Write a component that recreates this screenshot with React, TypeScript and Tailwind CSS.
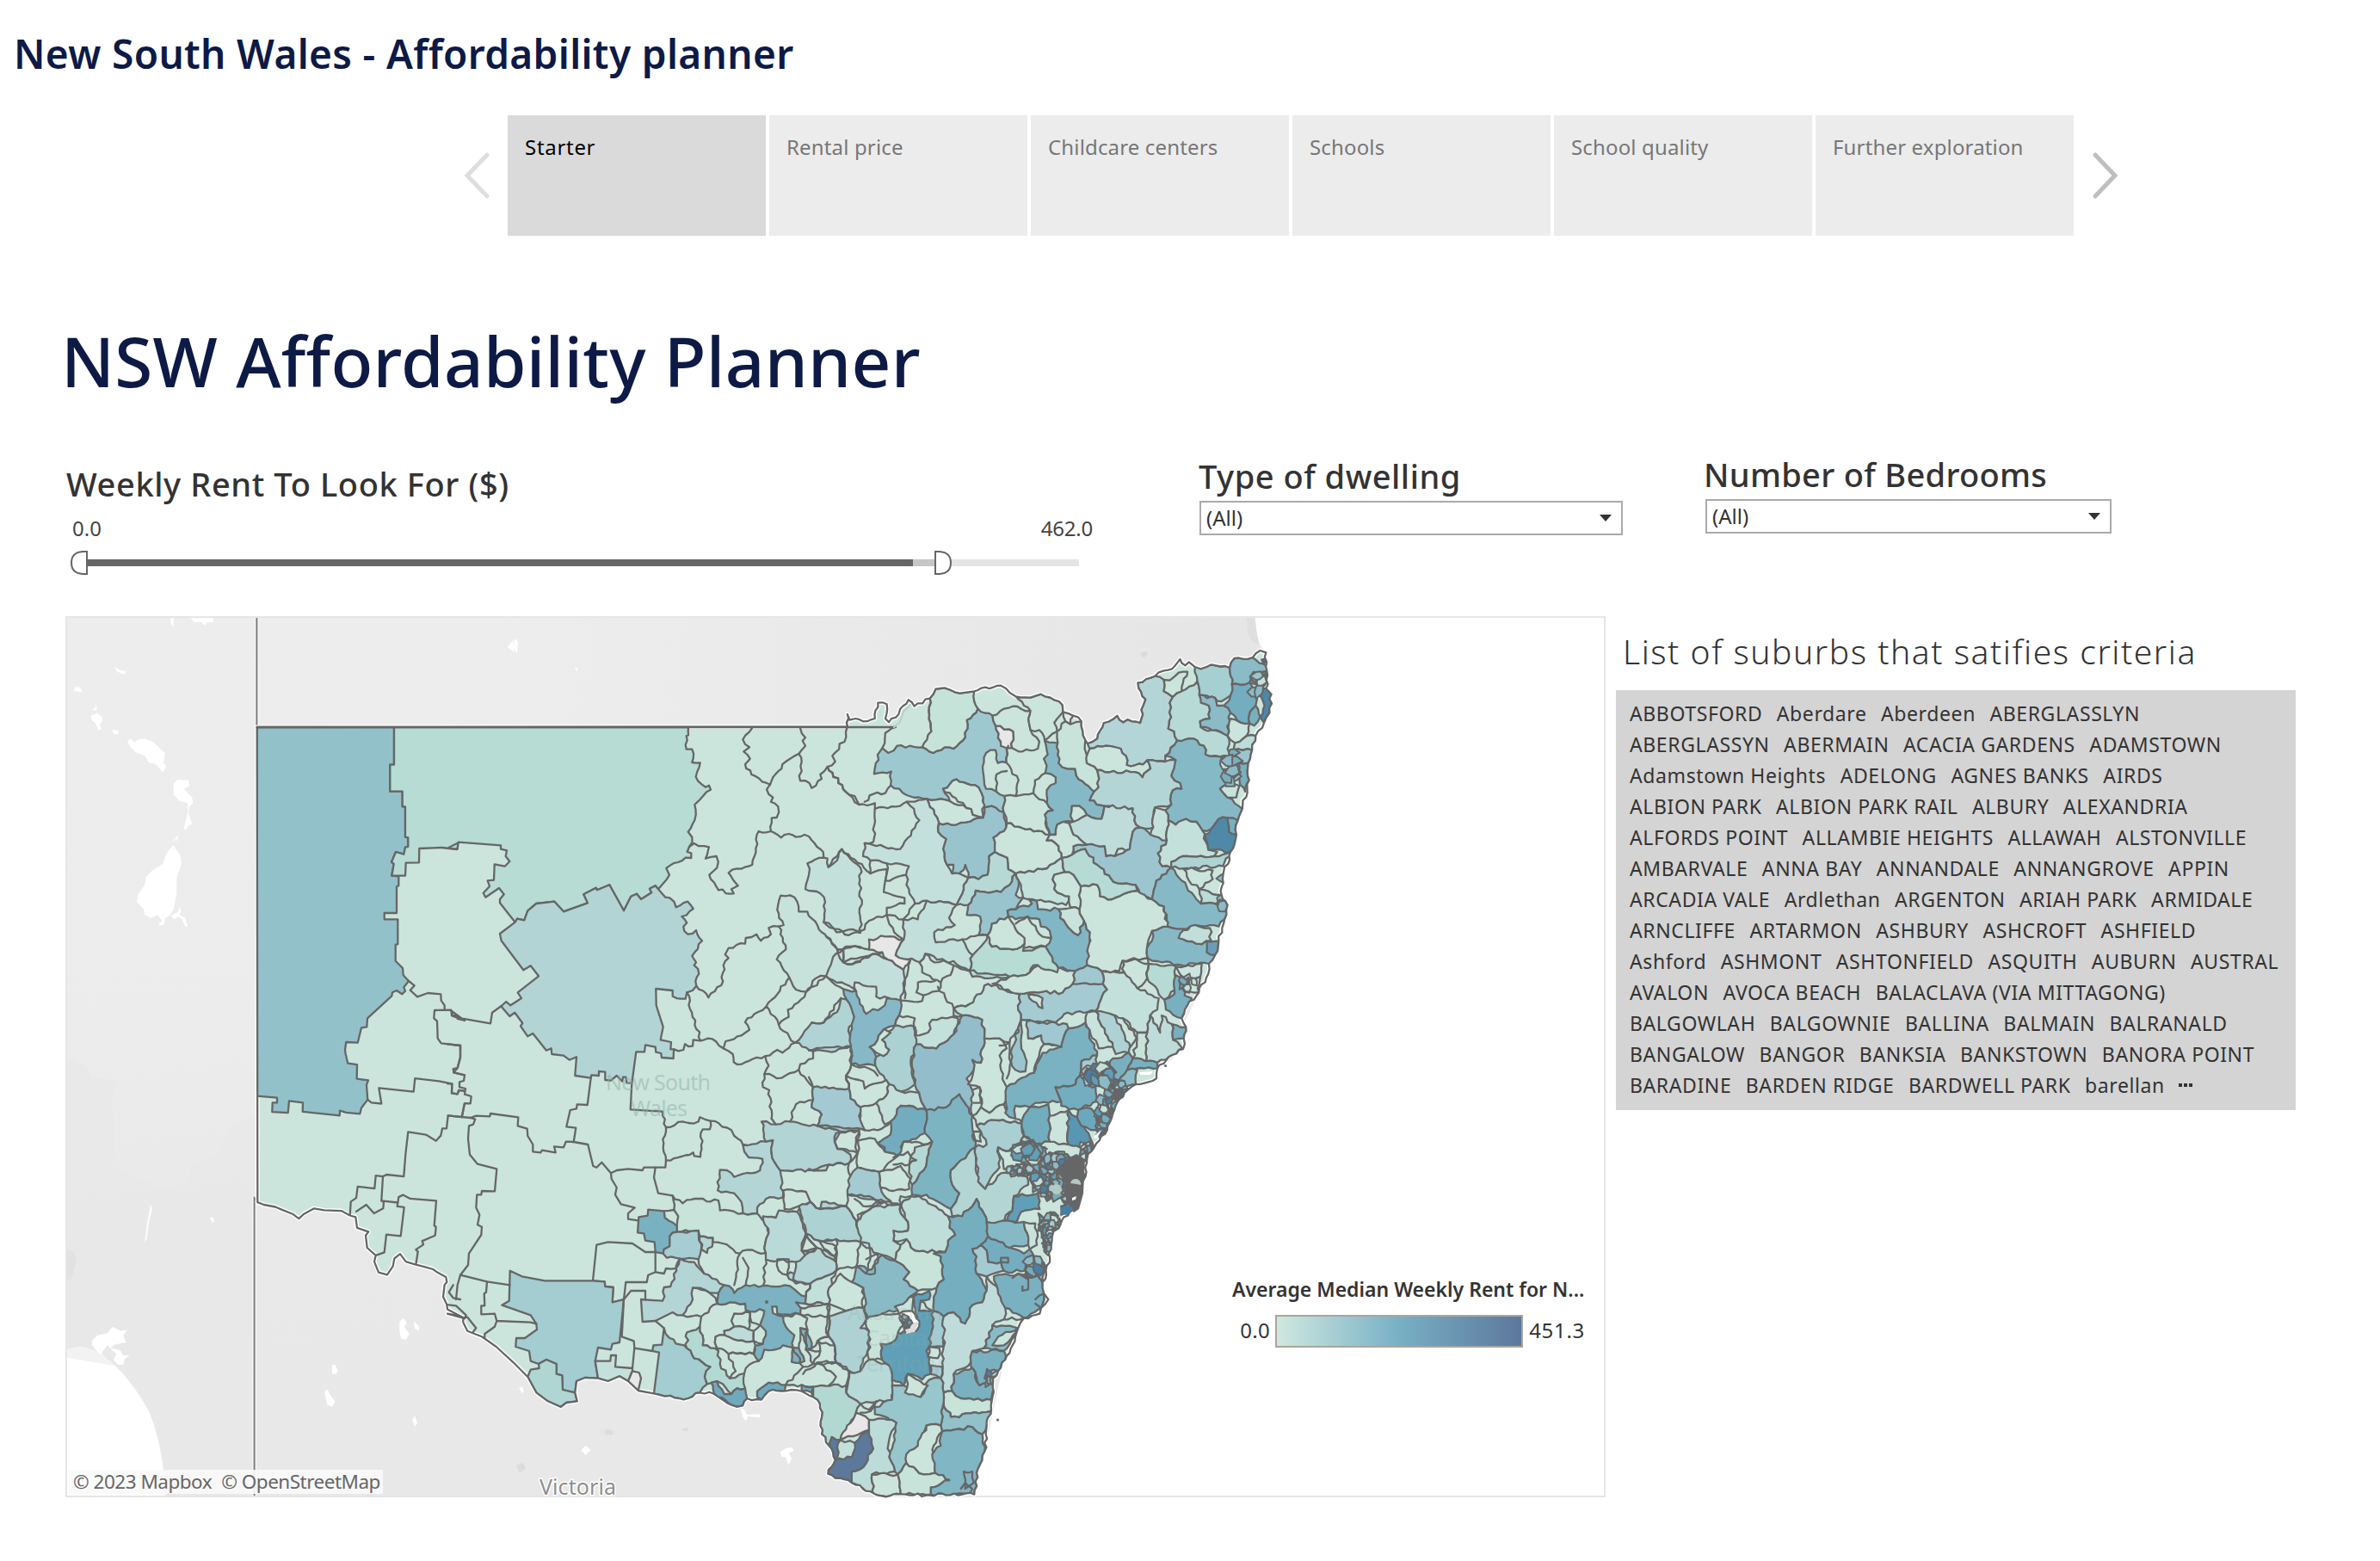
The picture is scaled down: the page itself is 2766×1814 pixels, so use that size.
import React from "react";

const FONT = "font-['Noto_Sans',sans-serif]";

/* ---------- map geometry ---------- */

// Survey sheets: origin on the page and drawing units per page pixel.
const SHEETS: Record<string, [number, number, number, number]> = {
  A: [60, 700, 3, 3],
  B: [60, 1200, 3, 2.8],
  C: [520, 820, 3, 3],
  D: [520, 1280, 3, 3],
  E: [960, 740, 2.904, 3],
  F: [940, 1100, 3, 3],
  G: [900, 1380, 3, 3],
};

type Pt = [number, number];

function parse(src: string): Pt[] {
  let s = SHEETS.A;
  const out: Pt[] = [];
  for (const tok of src.trim().split(/\s+/)) {
    if (SHEETS[tok]) {
      s = SHEETS[tok];
      continue;
    }
    const [x, y] = tok.split(",").map(Number);
    out.push([s[0] + x / s[2], s[1] + y / s[3]]);
  }
  return out;
}

function rnd(a: number, b: number, k = 0) {
  const v = Math.sin(a * 12.9898 + b * 78.233 + k * 37.719) * 43758.5453;
  return v - Math.floor(v);
}

const anchors: Pt[] = [];

function snap(pts: Pt[]): Pt[] {
  const n = anchors.length;
  const res: Pt[] = [];
  for (const p of pts) {
    let best: Pt | null = null;
    let bd = p[0] < 760 ? 2.5 : 5;
    for (let i = 0; i < n; i++) {
      const d = Math.hypot(anchors[i][0] - p[0], anchors[i][1] - p[1]);
      if (d < bd) {
        bd = d;
        best = anchors[i];
      }
    }
    const q = best ?? p;
    if (!best) anchors.push(p);
    const last = res[res.length - 1];
    if (!last || last !== q) res.push(q);
  }
  return res;
}

// Splits an edge into small deterministic wiggles; shared edges come out identical.
function rough(p: Pt, q: Pt): Pt[] {
  const flip = p[0] > q[0] || (p[0] === q[0] && p[1] > q[1]);
  const a = flip ? q : p;
  const b = flip ? p : q;
  const len = Math.hypot(b[0] - a[0], b[1] - a[1]);
  const amp = a[0] < 770 ? 0 : 1.9;
  const n = Math.floor(len / 4.5);
  if (n < 2 || amp === 0) return [q];
  const nx = -(b[1] - a[1]) / len;
  const ny = (b[0] - a[0]) / len;
  const mids: Pt[] = [];
  for (let i = 1; i < n; i++) {
    const o = (rnd(a[0] + i, b[1], i) - 0.5) * 2 * amp;
    mids.push([a[0] + ((b[0] - a[0]) * i) / n + nx * o, a[1] + ((b[1] - a[1]) * i) / n + ny * o]);
  }
  if (flip) mids.reverse();
  return [...mids, q];
}

function toPath(pts: Pt[], close: boolean) {
  if (!pts.length) return "";
  let d = `M${pts[0][0].toFixed(1)} ${pts[0][1].toFixed(1)}`;
  const seq = close ? [...pts, pts[0]] : pts;
  for (let i = 1; i < seq.length; i++)
    for (const r of rough(seq[i - 1], seq[i])) d += `L${r[0].toFixed(1)} ${r[1].toFixed(1)}`;
  return d + (close ? "Z" : "");
}

const OUTLINE = `A 716,435 E 72,313 72,270 80,290 100,285 125,295 165,285 175,230 205,235 200,285 212,298 245,270 250,252 278,220 298,242 350,215 370,182 400,178 435,193 500,190 590,170 620,195 640,208 690,212 725,200 770,220 798,238 800,262 835,275 862,295 868,345 882,372 915,355 937,300 983,275 1003,298 1018,288 1060,300 1070,240 1078,218 1055,180 1052,160 1110,137 1140,118 1168,112 1195,78 1212,100 1225,88 1245,105 1265,112 1300,97 1362,108 1378,75 1440,72 1465,48 1485,55 1488,120 1485,180 1503,200 1497,265 1478,300 1450,345 1438,395 1425,440 1428,500 1405,600 1390,640 1385,690 1365,750 1340,830 1335,900 1355,935 1345,985 1325,1060 1313,1110 1292,1140 F 1385,110 1360,160 1320,205 1300,250 1315,280 1307,320 1305,357 1255,385 1215,425 1212,460 1140,480 1100,510 1065,570 1040,640 995,700 970,740 965,800 950,850 945,890 910,925 858,990 G 975,140 965,200 960,260 935,330 940,370 955,390 930,420 925,440 870,455 850,490 830,550 805,600 780,640 762,680 755,760 740,830 733,920 710,980 697,1070 360,1073 270,1030 187,998 212,950 190,900 165,860 165,800 150,740 130,715 D 1275,1030 1235,1010 1200,1005 1175,1010 1120,1010 1095,1040 1045,1035 1030,1060 990,1058 960,1040 930,1020 880,1015 840,1035 760,1028 720,1018 665,1008 630,975 600,958 560,975 525,965 480,963 450,975 445,1015 452,1045 415,1050 395,1065 350,1045 310,1015 280,960 230,910 170,855 120,820 70,800 55,770 55,755 30,745 0,740 B 1440,930 1420,920 1380,900 1378,885 1365,860 1370,820 1378,812 1375,795 1345,780 1330,770 1300,762 1270,755 1235,745 1215,720 1195,735 1190,760 1170,788 1140,780 1125,745 1130,725 1100,700 1095,660 1105,648 1065,635 1060,600 1040,595 1010,580 950,578 915,572 880,590 862,605 840,590 800,575 780,567 740,560 718,552`;

const REGIONS: [string, string][] = [
  ["#92c1ca", `A 716,435 1194,435 1194,566 1180,566 1180,659 1223,659 1223,712 1233,712 1233,818 1243,820 1243,852 1233,854 1228,878 1200,870 1185,905 1193,912 1186,953 1210,955 1210,988 1203,990 1203,1083 1160,1083 1160,1105 1207,1105 1207,1192 1199,1193 1199,1250 1224,1275 1226,1300 1245,1320 1228,1342 1233,1355 1222,1366 1203,1353 1188,1360 1186,1372 1101,1450 1099,1480 1080,1483 1067,1535 1027,1533 1023,1560 B 1025,70 1033,100 1065,104 1064,150 1104,155 1098,170 1102,218 1080,245 1075,264 1027,260 1005,254 1004,270 875,257 876,228 828,222 824,261 769,258 770,228 786,228 786,212 716,206`],
  ["#b6dcd4", `A 1194,435 C 840,75 840,103 833,105 833,152 853,152 853,198 881,199 866,248 900,284 912,278 918,293 883,325 862,345 866,380 862,400 839,440 853,458 843,492 836,510 850,514 850,531 830,530 763,567 774,590 765,605 735,640 725,628 705,638 712,652 675,675 660,656 640,665 615,715 565,625 522,643 518,635 475,658 489,688 405,718 373,683 310,690 280,715 268,748 243,743 236,755 183,688 183,675 197,658 180,636 133,668 125,653 147,630 140,610 162,608 164,553 200,560 217,543 203,525 207,505 186,500 186,487 38,476 35,500 0,497 A 1418,838 1414,861 1360,855 1282,858 1281,907 1235,908 1233,953 1186,953 1193,912 1185,905 1200,870 1228,878 1233,854 1243,852 1243,820 1233,818 1233,712 1223,712 1223,659 1180,659 1180,566 1194,566`],
  ["#b2d4d5", `C 236,755 183,795 188,820 265,922 290,907 318,943 245,1000 258,1020 220,1045 205,1032 187,1048 217,1083 235,1070 262,1107 255,1117 280,1153 298,1143 345,1202 362,1195 364,1215 405,1220 425,1235 450,1225 445,1290 500,1298 502,1288 528,1290 528,1275 550,1277 550,1305 570,1307 590,1290 610,1310 612,1295 622,1295 625,1315 643,1317 658,1207 687,1207 690,1183 725,1190 727,1208 745,1212 747,1227 788,1230 790,1198 778,1198 780,1173 743,1165 752,1120 728,1045 727,987 785,993 785,1013 830,1022 835,1000 868,977 865,960 877,935 860,905 867,895 853,873 888,820 867,783 838,797 823,770 835,757 817,735 857,708 838,683 797,703 775,670 760,668 735,640 725,628 705,638 712,652 675,675 660,656 640,665 615,715 565,625 522,643 518,635 475,658 489,688 405,718 373,683 310,690 280,715 268,748 243,743`],
  // Riverina and the south west
  ["#b4d5d6", `D 1030,150 1110,140 1135,135 1130,180 1160,240 1170,330 1168,335 1110,340 1080,370 1080,390 1030,390 1025,350 1000,320 942,310 950,238 975,240 1000,263 1090,240 1098,200 1050,195 1035,175`],
  ["#c7e3da", `D 785,328 820,355 835,343 945,345 950,380 1020,395 1080,390 1120,430 1120,460 1108,495 1110,528 1030,520 1020,530 960,495 925,490 925,475 880,470 875,450 800,455 800,435 805,400 790,378`],
  ["#7ab1c1", `D 700,377 755,382 758,405 800,435 795,455 775,470 775,505 755,515 752,530 725,525 722,490 690,485 685,460 663,457 667,403 698,398`],
  ["#a6cdd2", `D 800,455 850,452 880,455 885,515 875,550 810,548 765,545 752,530 755,515 775,505 775,470`],
  ["#b4d5d6", `D 885,475 915,468 925,495 905,528 885,515`],
  ["#cbe5dc", `D 520,500 560,490 645,495 690,525 730,530 725,595 700,605 695,630 622,630 615,690 575,700 578,648 550,645 548,628 507,625`],
  ["#b4d5d6", `D 800,550 860,560 895,600 965,640 945,668 855,650 855,690 820,745 785,735 725,765 680,768 675,690 750,695 755,648 778,645`],
  ["#a3cdd0", `D 218,590 260,610 340,625 507,625 548,628 550,645 578,648 575,700 612,690 600,840 575,845 570,865 525,858 515,905 525,965 480,963 450,975 445,1015 402,1005 400,955 380,950 380,915 345,900 318,915 290,905 285,870 238,855 240,825 270,825 312,795 310,775 290,745 190,710 215,695`],
  ["#b0d6d4", `D 345,900 380,915 380,950 400,955 402,1005 445,1015 452,1045 415,1050 395,1065 350,1045 310,1015 280,960 290,935 320,930 318,915`],
  ["#a3cdd0", `D 755,790 775,825 835,860 860,895 917,925 897,960 905,985 880,1015 840,1035 760,1028 720,1018 738,875 715,870 718,850 748,848`],
  ["#c4e0db", `D 585,925 645,930 645,940 630,975 600,958 560,975 525,965 515,905 568,905 570,885 588,885`],
  ["#e7e7e7", `D 645,940 668,945 675,965 665,1008 630,975`],
  ["#cbe5dc", `D 885,750 940,705 985,700 1038,705 1055,735 1000,740 990,765 1000,785 965,800 967,815 935,820 940,860 945,870 890,850 880,785`],
  ["#7cb2c1", `D 945,668 965,650 995,655 1000,668 1040,640 1100,642 1175,640 1210,655 1250,680 1248,705 1215,700 1232,720 1230,742 1180,742 1150,740 1148,715 1132,715 1135,738 1150,745 1170,750 1180,785 1210,815 1205,858 1170,850 1160,860 1105,865 1085,905 1068,880 1068,850 1100,845 1110,800 1090,780 1105,730 1040,728 1038,705 985,700 945,700`],
  ["#bddcd9", `D 965,800 1000,785 1050,795 1068,800 1068,835 1000,830 967,815`],
  ["#cbe5dc", `D 935,820 967,815 1000,830 1068,835 1068,880 980,880 940,860`],
  ["#b3d9d3", `D 840,862 835,805 880,785 890,850 945,870 950,915 985,965 1035,948 1038,1000 1010,1000 990,1020 960,985 940,975 900,985 897,960 917,925 860,895`],
  ["#6fa9be", `D 920,980 945,978 965,1020 1000,1030 1003,1005 1035,1000 1040,1045 1025,1060 990,1058 930,1020`],
  ["#6fa9be", `D 1080,1010 1120,980 1180,988 1185,1005 1125,1010 1105,1040 1080,1030`],
  ["#6fa9be", `D 1235,988 1275,995 1272,1020 1235,1010`],
  ["#7cb2c1", `D 1200,865 1225,860 1245,905 1200,908`],
  ["#7cb2c1", `D 1230,790 1255,795 1270,860 1250,865`],
  ["#aed3d4", `D 1220,385 1265,350 1300,375 1305,350 1390,365 1410,420 1428,440 1425,465 1380,470 1340,485 1295,485 1250,460 1235,425`],
  ["#badad9", `D 1100,400 1145,405 1155,380 1220,385 1240,440 1250,460 1235,520 1250,540 1255,555 1215,560 1110,550 1110,528 1108,495 1120,460`],
  ["#cbe5dc", `D 1250,460 1288,510 1270,525 1235,520`],
  ["#b4d5d6", `D 1288,510 1350,540 1355,590 1310,620 1265,635 1215,635 1185,605 1195,595 1220,605 1230,585 1215,560 1255,555 1250,540`],
  ["#b2d4d5", `D 1095,70 1145,80 1195,70 1290,85 1370,105 1350,140 1360,165 1405,185 1400,215 1330,220 1320,240 1160,240 1130,180 1135,135 1110,130`],
  ["#a5cbd2", `C 1275,1330 1325,1340 1400,1335 1405,1370 1440,1400 D 1435,100 1370,105 1290,85 1305,45 1270,20`],
  // Central west
  ["#c6e2da", `C 1162,662 1210,668 1225,718 1255,718 1295,780 1360,850 1345,915 1320,943 1285,950 1250,998 1215,990 1192,948 1148,885 1180,850 1155,770 1172,765 1150,712`],
  ["#c4e0db", `C 1255,550 1312,530 1325,533 1328,563 1358,540 1375,500 1440,565 1440,792 1385,798 1330,758 1312,755 1317,685 1300,655 1248,640 1260,590`],
  ["#b0d4d5", `C 1212,1175 1245,1135 1270,1105 1312,1105 1365,1055 1372,1020 1392,1025 1415,1060 1420,1105 1400,1120 1407,1188 1340,1208 1275,1205`],
  ["#c3dfdb", `F 85,35 120,10 120,55 150,62 235,25 275,45 330,80 335,115 320,188 235,175 235,140 160,125 165,155 60,105`],
  ["#86b8c7", `F 120,148 172,155 178,200 200,235 265,205 272,180 320,188 315,240 300,275 262,288 240,325 212,350 235,385 232,415 148,410 145,300 158,245 130,185`],
  ["#acd1d3", `F 300,275 370,280 375,340 355,400 370,480 320,505 280,480 260,450 232,415 235,385 280,360 255,325`],
  ["#cbe5dc", `F 262,288 285,300 255,325 280,360 260,382 235,370 212,350 240,325`],
  ["#cbe5dc", `F 130,450 190,470 195,495 270,465 280,480 270,520 235,545 185,555 150,535 140,495`],
  ["#a3cad2", `F 25,490 140,495 150,535 185,555 175,590 195,640 110,630 40,625 45,580 10,550`],
  ["#c2dfda", `F 280,480 320,505 385,510 410,570 320,555 300,600 265,620 240,550 270,520`],
  ["#74acbf", `F 320,555 405,560 405,650 375,670 330,680 310,730 265,715 265,700 240,685 285,655 285,610`],
  ["#93bdcb", `F 535,240 605,255 612,320 600,405 570,395 575,430 550,460 570,500 570,590 510,550 525,515 480,560 410,570 385,510 370,480 360,420 375,345 445,355 505,305`],
  ["#c3e0da", `F 370,310 415,300 430,255 480,250 520,250 505,305 445,355 375,345`],
  ["#cbe5dc", `F 612,320 665,320 690,355 665,380 670,430 690,490 680,550 630,580 600,560 595,490 555,480 575,430 570,395 600,405`],
  ["#7db4c2", `F 410,570 480,560 525,515 570,590 580,700 530,745 495,780 500,830 525,860 495,915 410,865 360,865 360,830 400,780 430,680 405,650`],
  ["#a9cfd3", `F 585,625 650,605 745,615 750,660 720,720 660,700 665,770 615,845 590,820 585,740 580,700 620,690 600,645`],
  ["#b3d6d5", `F 580,700 590,820 615,845 670,790 760,800 765,830 715,870 710,920 670,960 655,980 620,960 585,880 535,940 500,940 495,915 525,860 500,830 495,780 530,745`],
  ["#cbe5dc", `F 660,700 720,720 770,760 740,780 680,775`],
  ["#b0d6d5", `F 720,720 760,665 830,705 790,730`],
  ["#c8e4da", `F 575,590 605,550 640,580 680,560 720,600 745,615 650,605 585,625`],
  ["#7ab2c2", `F 965,265 1005,380 950,400 945,450 930,480 860,490 880,540 790,545 770,560 720,555 715,590 685,580 690,490 785,440 815,370 880,350 905,285`],
  ["#74adbf", `F 860,490 930,480 945,450 1000,490 1005,540 940,570 880,555 880,540`],
  ["#72acbf", `F 745,600 770,560 835,550 840,590 840,680 790,690 750,660`],
  ["#cbe5dc", `F 840,590 905,570 905,690 840,680`],
  ["#5896b3", `F 905,580 935,595 975,650 985,690 920,695 905,690`],
  ["#6ca8bd", `F 940,575 985,565 1010,620 1000,640 950,625 935,595`],
  ["#c1dfda", `F 505,215 560,200 625,130 735,165 730,220 740,255 700,335 665,320 612,320 605,255 535,240 505,240`],
  ["#b5dcd4", `F 600,0 825,0 870,75 800,65 770,90 700,105 570,105 560,85`],
  ["#a5cbd2", `F 735,165 800,160 885,160 920,130 930,85 970,65 1020,85 1025,130 1040,150 1000,225 890,235 860,265 740,255 730,220`],
  ["#cbe5dc", `F 765,165 815,180 815,215 780,190`],
  ["#cbe5dc", `F 640,130 700,105 770,90 800,65 920,90 920,130 885,160 800,160 735,165`],
  ["#c4e0da", `F 1020,85 1100,90 1145,145 1220,180 1215,220 1190,240 1180,300 1145,300 1095,250 1000,225 1040,150 1025,130`],
  ["#b5dbd4", `F 1185,60 1280,70 1280,150 1240,185 1180,110`],
  ["#78b0c0", `F 1280,100 1310,110 1310,170 1335,180 1300,250 1245,220 1245,190 1275,165`],
  ["#bfdcda", `F 1180,300 1190,240 1225,300 1230,240 1265,270 1270,325 1305,357 1255,385 1215,405 1175,400`],
  ["#78b0c0", `F 1265,270 1315,280 1300,330 1270,325`],
  ["#a0c8d0", `F 760,260 900,270 905,285 880,350 820,340 810,310 765,320`],
  ["#9bc5ce", `F 710,350 740,255 740,340 760,400 755,435 720,430 705,400`],
  ["#c9e3dc", `F 970,230 1005,235 1060,350 1010,355 965,265`],
  ["#aed1d4", `F 1005,235 1065,240 1120,350 1115,370 1070,375 1060,350`],
  ["#c8e3db", `F 1145,300 1180,300 1175,400 1130,390 1115,370`],
  ["#78b0c0", `F 1050,400 1115,370 1125,400 1110,430 1080,470 1050,450`],
  ["#78b0c0", `F 1125,400 1215,405 1210,430 1120,430`],
  ["#8abbc7", `F 1110,430 1145,430 1150,470 1100,490 1080,470`],
  ["#a5cbd2", `F 950,400 1005,380 1000,425 950,445`],
  ["#5f9fb8", `F 715,870 800,860 805,915 740,925 725,960 690,955 710,920`],
  ["#4a7fa3", `F 880,905 905,900 925,915 880,935`],
  ["#a5cbd2", `F 145,800 170,770 245,785 250,840 290,900 285,920 265,890 135,865`],
  ["#cbe5dc", `F 245,785 320,765 355,810 350,845 280,850 250,840`],
  ["#cbe5dc", `F 165,680 230,670 265,715 310,730 245,785 170,770 170,720`],
  ["#b5d8d6", `F 370,700 430,680 400,780 360,830 350,760`],
  // North west
  ["#9ec8d0", `E 512,250 562,275 572,310 590,380 615,380 608,438 580,440 572,395 540,405 530,470 540,530 575,540 602,555 600,612 560,590 535,595 530,560 515,525 440,497 395,530 418,573 340,565 272,552 218,518 220,470 162,478 168,440 190,388 210,405 240,380 325,385 362,405 400,385 430,390 470,350 475,290`],
  ["#e7e7e7", `E 572,310 632,330 628,388 590,380`],
  ["#cbe5dc", `E 562,275 630,242 690,258 685,300 690,325 720,365 715,390 650,400 628,388 632,330 572,310`],
  ["#cbe5dc", `E 690,258 640,208 690,212 725,200 770,220 798,238 800,262 770,300 780,330 738,362 720,325 690,325 685,300`],
  ["#c6e3d9", `E 350,215 370,182 400,178 435,193 500,190 500,225 512,250 475,290 470,350 430,390 400,385 362,405 325,385 355,330`],
  ["#e7e7e7", `E 800,262 835,275 825,305 808,295`],
  ["#86b9c6", `E 738,362 782,370 785,440 815,460 840,460 845,485 905,540 890,570 940,590 930,635 880,620 855,590 830,590 825,625 835,645 800,645 780,655 775,690 755,690 745,660 738,620 765,605 745,580 745,535 775,510 775,490 740,475 745,450 735,425 748,410`],
  ["#c8e4da", `E 782,370 780,330 808,295 825,305 862,295 868,345 882,420 880,440 915,465 920,525 905,540 845,485 840,460 815,460 785,440`],
  ["#b3d5d7", `E 882,372 915,355 937,300 983,275 1003,298 1018,288 1060,300 1070,240 1078,218 1055,180 1052,160 1110,137 1140,150 1140,190 1170,210 1160,230 1165,280 1155,320 1175,330 1185,362 1145,415 1145,435 1085,430 1070,445 1015,447 1012,415 995,390 945,380 890,390`],
  ["#cbe5dc", `E 890,390 945,380 995,390 1012,415 1015,447 1070,445 1085,430 1095,460 1068,490 1055,475 920,475 880,440`],
  ["#b7dad6", `E 1253,155 1260,203 1292,240 1295,285 1262,295 1265,315 1355,345 1360,420 1330,418 1280,410 1275,380 1240,355 1185,362 1175,330 1155,320 1165,280 1160,230 1170,210 1200,190`],
  ["#cbe5dc", `E 1140,150 1160,152 1190,125 1220,122 1205,160 1190,195 1170,210 1140,190`],
  ["#a6cfd1", `E 1245,105 1300,97 1362,108 1370,165 1365,205 1335,225 1285,205 1260,203 1253,155`],
  ["#8abbc7", `E 1362,108 1378,75 1440,72 1478,95 1478,130 1445,135 1430,160 1370,165`],
  ["#73adbf", `E 1370,165 1430,160 1455,215 1450,240 1432,260 1430,302 1400,300 1365,265 1342,240 1365,205`],
  ["#8abbc7", `E 1260,203 1315,215 1320,240 1342,240 1365,265 1355,345 1330,330 1265,315 1262,295 1295,285 1292,240 1265,230`],
  ["#5f9fb8", `E 1445,135 1482,125 1482,162 1440,150`],
  ["#4d87a8", `E 1462,180 1485,180 1503,200 1497,265 1480,290 1465,280 1480,240 1460,200`],
  ["#78b0c0", `E 1432,260 1450,240 1465,280 1445,310 1430,302`],
  ["#46709c", `E 1470,80 1487,75 1488,100`],
  ["#cbe5dc", `E 1365,285 1400,300 1430,302 1420,345 1380,370 1355,345`],
  ["#bddcd9", `E 1380,370 1420,345 1450,345 1438,395 1375,395`],
  ["#86b9c6", `E 1185,362 1240,355 1275,380 1280,410 1330,418 1360,420 1345,450 1370,480 1365,510 1330,530 1355,560 1405,600 1390,640 1325,635 1300,670 1270,675 1250,645 1215,635 1180,655 1155,640 1145,605 1165,585 1170,535 1200,530 1195,510 1165,485 1165,435 1180,430 1145,415`],
  ["#9bc5ce", `E 1375,395 1425,395 1425,440 1390,440 1360,420`],
  ["#78b0c0", `E 1390,450 1425,440 1428,500 1415,540 1395,500`],
  ["#c8e3db", `E 1330,530 1365,510 1395,520 1385,560 1355,560`],
  ["#b4d5d6", `E 920,475 1055,475 1068,490 1095,460 1085,430 1145,435 1180,430 1165,485 1195,510 1200,530 1170,535 1165,585 1110,595 1105,665 1060,665 1040,640 1035,598 970,595 940,590 890,570 905,540 920,525`],
  ["#bfdcdb", `E 880,620 930,635 940,590 1035,598 1040,640 1060,665 1035,680 1028,715 1025,740 985,740 975,765 945,765 940,730 880,725 835,690 820,650`],
  ["#cbe5dc", `E 830,590 855,590 880,620 835,645 825,625`],
  ["#9cc5cf", `E 1060,665 1095,690 1130,690 1150,710 1120,755 1135,800 1165,805 1115,850 1100,915 1060,900 1045,865 970,855 915,795 875,740 830,760 835,730 880,725 940,730 945,765 975,765 1025,740 1028,715 1035,680`],
  ["#c4e0da", `E 1110,595 1145,605 1155,640 1150,710 1105,690`],
  ["#c4e0da", `E 1155,640 1180,655 1215,635 1250,645 1270,675 1290,742 1320,750 1310,765 1220,765 1165,785 1165,805 1135,800 1120,755 1150,710`],
  ["#4f89a8", `E 1325,635 1355,632 1360,680 1385,690 1365,750 1290,742 1278,690 1305,675`],
  ["#78b0c0", `E 1355,632 1390,640 1385,690 1360,680`],
  ["#add3d3", `E 1165,785 1220,765 1310,765 1365,750 1340,800 1205,808 1165,805`],
  ["#cbe5dc", `E 1205,808 1305,815 1305,845 1260,880 1225,850`],
  ["#86b9c6", `E 1165,805 1200,850 1250,915 1265,930 1330,925 1355,935 1345,985 1325,1010 1280,1010 1245,1005 1215,1020 1152,1010 1150,970 1140,940 1100,915 1115,850`],
  ["#b9dcd6", `E 1262,880 1320,900 1335,900 1330,925 1265,930`],
  ["#86b9c6", `E 1100,1025 1152,1010 1205,1015 1190,1050 1250,1070 1300,1060 1313,1110 1292,1140 1200,1145 1135,1135 1085,1120 1083,1085 1100,1060`],
  ["#c1dfda", `E 1195,1035 1240,1015 1295,1015 1300,1060 1250,1070 1190,1050`],
  ["#6b9dba", `E 1285,1062 1325,1060 1313,1110 1285,1100`],
  ["#cbe5dc", `E 860,870 915,865 925,905 965,915 1050,885 1100,915 1140,940 1152,1010 1100,1025 1083,1085 1085,1120 1000,1130 990,1165 930,1160 885,1145 890,1030 870,990 855,950`],
  ["#b5dbd4", `E 795,770 830,760 875,740 915,795 970,855 1045,865 1050,885 965,915 925,905 915,865 860,870 835,830 805,820`],
  ["#c4e0da", `E 640,825 730,810 795,770 805,820 770,830 770,880 820,905 810,935 710,920 665,910 650,850`],
  ["#cbe5dc", `E 770,830 805,820 835,830 860,870 855,950 825,945 820,905 770,880`],
  ["#81b6c4", `E 612,955 640,950 695,930 685,915 710,920 715,950 785,950 790,980 850,1040 870,990 890,1030 885,1080 885,1145 850,1170 790,1155 735,1080 760,1050 755,1025 725,1010 720,985 680,975 640,985 615,975`],
  ["#c9e3dc", `E 825,945 855,950 870,990 850,1040 790,980 785,950`],
  ["#9ac4cd", `E 560,590 600,612 608,665 565,700 570,750 550,765 545,830 515,845 480,840 470,795 445,840 425,825 430,795 408,795 395,740 405,705 378,680 380,650 440,655 500,635 530,630 535,595`],
  ["#cbe5dc", `E 340,565 418,573 490,600 495,620 530,630 500,635 440,655 380,650 375,630`],
  ["#cbe5dc", `E 440,497 515,525 530,560 530,630 495,620 490,600 445,575 395,530`],
  ["#c4e0dc", `E 272,575 340,565 375,630 378,680 405,705 395,740 408,795 425,825 475,840 440,935 340,920 300,930 280,880 270,830 280,800 205,790 150,780 125,765 130,720 250,740 315,640 285,590`],
  ["#b7d9d6", `E 550,765 570,750 612,770 615,810 630,830 620,865 590,890 505,885 480,935 440,935 475,840 515,845 545,830`],
  ["#9ac4cd", `E 505,885 590,890 620,865 630,830 650,850 640,900 665,910 650,930 640,950 612,955 615,975 560,1000 545,1040 515,1040 520,975 475,970 480,935`],
  ["#cbe5dc", `E 565,700 608,665 610,650 745,680 745,710 775,720 795,770 730,810 640,825 615,810 612,770 570,750`],
  ["#cbe5dc", `E 602,555 640,555 700,545 745,580 765,605 738,620 745,680 610,650 600,612`],
  ["#cbe5dc", `E 780,655 800,645 820,650 835,690 880,725 835,730 830,760 795,770 775,720 745,710 755,690 775,690`],
  ["#e7e7e7", `E 145,1055 200,1045 262,1055 235,1110 285,1125 270,1165 215,1130 190,1100 145,1090`],
  ["#c2dfdb", `E 340,920 440,935 415,980 435,1005 365,1030 370,1065 460,1055 495,1110 485,1160 430,1130 365,1135 335,1105 315,1135 235,1110 262,1055 260,985 310,985`],
  ["#b7dcd4", `E 520,1070 545,1040 560,1080 630,1090 670,1070 665,1095 735,1080 790,1155 780,1170 700,1145 680,1180 620,1185 485,1170 500,1120`],
  ["#cbe5dc", `E 560,1000 615,985 640,1020 670,1050 670,1070 630,1090 560,1080 545,1040`],
  ["#a0c8d0", `E 835,1172 885,1145 930,1160 930,1200 835,1200`],
  // South east
  ["#74aebf", `G 605,100 660,95 700,40 740,130 745,170 720,200 690,215 705,240 705,300 740,360 725,400 690,410 665,475 625,435 590,450 555,430 565,350 590,320 580,240 555,230 595,225 605,185 630,165 610,140`],
  ["#bfded9", `G 440,30 505,30 605,100 610,140 630,165 605,185 595,225 490,220 460,180 415,185 415,150 465,150 465,120 440,90`],
  ["#b8dcd8", `G 290,95 340,70 440,60 440,90 465,120 465,150 415,150 415,185 440,200 420,255 360,230 300,190 285,150`],
  ["#add2d3", `G 85,65 130,50 160,75 250,65 285,115 290,180 215,180 145,185 100,165`],
  ["#c7e3da", `G 440,200 460,180 490,220 595,225 555,230 580,240 590,320 565,350 500,360 450,320 470,295 420,255`],
  ["#89bbc7", `G 270,330 285,275 340,285 375,235 420,255 470,295 450,320 500,360 440,420 375,440 360,460 320,460 310,350`],
  ["#cbe5dc", `G 215,180 290,180 300,190 290,270 215,290 215,260`],
  ["#b4d5d6", `G 75,260 150,220 215,260 215,290 115,330 65,320`],
  ["#cbe5dc", `G 190,350 230,300 270,330 310,350 310,420 250,430 190,405`],
  ["#c2dfda", `G 115,330 210,300 190,350 190,405 120,405 110,370`],
  ["#aed2d3", `G 190,450 250,430 310,420 320,460 300,490 330,500 325,570 300,640 280,655 215,610 210,550 190,520`],
  ["#5f9fb8", `G 485,380 540,360 540,390 510,395 505,430 545,440 540,555 530,570 545,650 515,670 465,650 450,690 410,670 400,620 375,600 370,545 410,540 415,500 440,510 500,480`],
  ["#c8e4da", `G 320,460 375,440 435,440 450,480 410,540 370,545 375,600 330,600 325,490`],
  ["#ffffff", `G 435,440 480,430 505,465 495,500 455,505 440,480`],
  ["#cbe5dc", `G 420,415 475,370 485,380 480,430 435,440`],
  ["#a5cbd2", `G 545,440 590,450 595,480 590,555 540,555`],
  ["#cbe5dc", `G 540,555 575,560 570,595 535,590`],
  ["#a5cbd2", `G 545,620 585,625 580,665 545,650`],
  ["#bfdcda", `G 590,450 625,435 665,475 690,410 725,400 740,360 740,310 775,345 805,420 800,460 760,480 730,560 690,570 685,610 625,650 620,710 590,715 580,665 590,555`],
  ["#79b1c1", `G 765,310 850,300 920,310 935,330 940,370 930,420 870,455 805,420 780,370`],
  ["#74adbf", `G 720,200 745,170 820,210 870,230 890,215 905,240 890,295 800,290 790,260 745,260 740,220`],
  ["#a5cbd2", `G 690,215 720,200 740,220 745,260 790,260 800,290 740,310 705,300 705,240`],
  ["#86b9c6", `G 740,130 800,115 870,120 885,200 820,210 745,170`],
  ["#c8e3db", `G 870,120 910,125 915,200 890,215 885,200`],
  ["#6ca8bd", `G 920,90 970,130 960,160 920,150`],
  ["#a5cbd2", `G 890,295 905,240 950,280 935,330 920,310`],
  ["#89bbc7", `G 760,480 850,490 800,570 725,550`],
  ["#cbe5dc", `G 760,550 780,520 845,490 800,550`],
  ["#79b1c1", `G 700,570 805,575 805,600 780,640 750,640 755,670 715,690 690,620`],
  ["#79b1c1", `G 625,650 690,630 715,690 762,680 755,740 650,735 620,710`],
  ["#c7e3da", `G 590,750 590,715 620,710 650,735 755,740 755,780 615,800`],
  ["#92c1ca", `G 590,750 615,800 755,780 740,830 725,860 690,835 585,850 580,830`],
  ["#b7d9d8", `G 260,645 300,640 325,590 400,620 410,670 410,740 340,750 300,755 250,715`],
  ["#97c6cd", `G 410,690 450,690 510,730 540,670 580,665 590,715 590,750 580,830 530,830 525,870 490,930 460,960 430,1000 420,990 400,940 420,880 425,820 350,790 350,765 410,740`],
  ["#cbe5dc", `G 460,655 535,690 520,735 455,715`],
  ["#cbe5dc", `G 530,830 580,830 585,850 555,900 560,995 520,1000 470,960 460,930 500,900`],
  ["#81b6c4", `G 585,850 690,835 725,860 733,920 710,980 697,1070 545,1070 545,1045 610,1020 560,995 550,930 580,900`],
  ["#b2d8d2", `G 130,685 250,690 250,715 300,755 280,800 230,880 200,870 190,900 165,860 165,800 150,740 130,715`],
  ["#e7e7e7", `G 285,785 330,810 330,845 235,880`],
  ["#5c799b", `G 190,900 205,870 235,880 240,940 280,890 330,845 350,870 345,910 310,975 270,1030 187,998 212,950`],
  ["#c4e0da", `G 235,885 280,880 270,940 225,945`],
  ["#bcdcd9", `G 335,840 330,800 410,810 425,830 400,880 405,940 420,990 340,1000 345,1070 270,1030 270,990 310,975 345,910`],
  ["#cbe5dc", `G 340,1000 430,1010 440,1070 360,1073 345,1070`],
  ["#c8e4da", `G 435,1010 470,960 520,1000 560,995 610,1020 545,1045 545,1070 440,1070`],
];

const LINES: string[] = [
  `C 845,998 882,1168 857,1165 855,1187 828,1180 823,1200 790,1198`,
  `C 882,1168 923,1162 962,1195`,
  `A 1245,1320 1265,1336 1250,1352 1275,1375 1312,1362 1357,1366 1358,1388 1370,1405 1370,1421`,
  `A 1425,1560 1425,1545 1358,1537 1346,1520 1344,1460 1333,1450 1335,1422 1393,1421 1395,1440 1413,1442 1415,1452 1440,1458 C 15,1065 17,1082 35,1088 150,1108 156,1070 187,1048`,
  `B 1425,45 1425,80 1415,115 1400,118 1402,130 1440,138`,
  `B 1102,218 1115,228 1150,231 1141,180 1262,192 1267,149 1350,158 1396,166 1395,197 1415,200 1420,187 1440,190`,
  `B 1440,230 1430,275 1382,270 1377,312 1362,312 1357,335 1340,352 1305,332 1243,323 1234,395 1228,468 1168,462 1155,468 1130,465 1126,507 1067,501 1062,538 1043,550 1042,590`,
  `B 1155,468 1150,547 1207,553 1205,565 1229,568 1217,662 1167,657 1160,715 1130,725`,
  `B 1150,547 1158,552 1156,572 1124,588 1097,560 1062,582`,
  `B 1207,553 1210,535 1225,528 1250,540 1341,547 1334,628 1340,632 1337,660 1292,678 1296,690 1270,706 1277,712 1272,752`,
  `C 0,1180 45,1186 45,1225 35,1262 20,1278 60,1288 57,1308 42,1312 42,1330 63,1335 60,1355 83,1362 80,1387 57,1387 50,1432`,
  `C 0,1318 15,1320 15,1350 35,1354 37,1342 60,1345`,
  `C 0,1432 80,1437 100,1430 148,1432 150,1422 247,1435 D 245,85 278,95 280,120 298,150 298,175 325,178 330,170 377,178 372,157 405,160 413,140 440,141 448,92 415,88 428,30 450,25 452,10 488,12 C 500,1298`,
  `D 80,57 97,62 90,80 75,85 72,130 78,185 105,218 172,235 165,313 120,312 118,325 103,325 100,370 112,395 105,430 120,437 118,465 75,530 72,570 45,605 35,640 30,690`,
  `D 440,141 490,150 508,225 520,230 538,212 570,250 590,240 630,235 680,240 685,230 760,230 762,205 752,160 762,90 750,35 638,28 C 643,1317`,
  `D 762,205 857,178 860,190 882,193 890,97 915,97 917,68 880,55 875,70 840,75 820,70 765,90`,
  `D 917,68 945,75 990,100 1000,120 1030,150`,
  `D 725,230 720,265 735,320 785,328`,
  `D 570,250 572,270 590,300 585,325 605,358 653,370 630,390 630,410 665,415`,
  `D 755,382 790,378`,
  `D 725,595 755,600 762,582 797,582 800,550`,
  `D 45,605 138,628 218,640`,
  `D 138,630 135,665 128,670 130,712 118,712 118,742 165,740 172,765 290,770 310,775`,
  `D 172,765 165,785 130,810 130,825`,
  `D 55,755 70,752 100,790 85,810`,
  `D 0,708 30,712 65,745 60,755`,
  `D 20,640 5,665 20,685 45,690`,
  `D 612,690 608,820 650,835 652,860 715,870`,
  `D 655,860 645,930`,
  `D 615,690 640,660 690,660 690,692`,
  `D 725,765 745,780 755,790`,
  `D 820,745 885,750`,
  `D 855,650 880,650 935,685 940,705`,
  `D 1000,740 1050,740 1060,785 1050,790`,
  `D 1060,735 1060,770 1090,780 1068,795 1068,840 1105,845`,
  `D 985,965 1005,940 980,890 1068,885`,
  `D 1035,948 1040,930 1085,905`,
  `D 1185,988 1240,925 1205,858`,
  `D 1240,925 1275,915 1245,865`,
  `D 1185,988 1235,988 1280,985 1275,1030`,
  `D 1170,750 1230,745 1255,755 1250,790`,
  `D 1250,705 1325,710 1320,790 1330,825 1290,835 1300,870 1250,870`,
  `D 1330,825 1350,850 1345,900 1285,910 1290,880`,
  `D 1170,310 1250,315 1262,350`,
  `D 1015,535 1000,640`,
  `D 1030,545 1050,580 1040,640`,
  `D 1110,560 1095,640`,
  `D 1150,550 1190,550 1175,595 1155,590 1150,550`,
  `D 1250,680 1265,635`,
  `D 875,550 895,600`,
  `C 1062,78 1030,118 1053,145 1033,160 1055,185 1038,205 1060,240 1125,275 1135,250 1165,220 1180,195 1225,168`,
  `C 1230,78 1248,112 1238,122 1248,140 1230,165 1235,195 1230,262 1262,270 1270,287 1305,255 1300,240 1325,213 1352,195 1342,175 1390,110 1395,80 1395,30`,
  `C 1325,213 1400,310 1420,315 1435,345`,
  `C 1125,275 1113,292 1135,320 1128,335 1153,352 1148,390 1130,392 1128,438 1085,438 1063,555 1010,568 980,583 1013,628 990,640 998,655 945,643 918,605 913,590 940,565 938,525 900,533 912,493 860,480 843,492`,
  `C 1128,438 1163,460 1190,447 1215,458 1245,450 1280,480 1310,510 1312,530`,
  `C 1155,770 1120,775 1128,797 1093,820 1078,797 1040,810 1038,830 980,845 968,868 980,880 962,905 955,975 910,1018 868,977`,
  `C 1360,850 1380,855 1420,838 1440,845`,
  `C 1380,855 1378,890 1410,905 1440,893`,
  `C 1192,948 1112,1048 1070,1075 1038,1103 1053,1130 1025,1150 970,1170 962,1195 995,1215 998,1243 1025,1250 1108,1222 1150,1200 1168,1210 1212,1175 1155,1112 1112,1048`,
  `C 1155,1112 1190,1085 1187,1060 1245,1015 1250,998`,
  `C 1108,1222 1120,1255 1105,1285 1165,1298 1225,1270 1230,1250 1275,1230 1275,1205`,
  `C 1105,1285 1100,1330 1122,1340 1130,1440`,
  `C 1225,1270 1285,1330`,
  `C 1407,1188 1410,1250 1390,1290 1395,1335`,
  `C 1320,943 1380,985`,
  `C 1275,1375 1215,1390 1197,1440 D 1195,70`,
  `C 1130,1440 D 1145,80`,
  `E 235,315 200,335 195,380`,
  `E 355,215 E 355,330`,
  `E 605,440 650,500 640,550`,
  `E 575,540 575,480 610,468`,
  `E 740,475 705,500 700,545`,
  `E 0,452 75,548 105,583 165,580 165,600 160,715 125,720`,
  `E 165,600 250,590 272,575`,
  `E 130,575 160,548 200,545 220,518`,
  `E 150,825 55,740 0,800`,
  `E 150,825 205,810 200,850 195,890 265,910 265,930 205,945 205,970`,
  `E 145,780 150,825`,
  `E 205,790 205,855 270,840`,
  `E 0,1000 35,1030 130,1020 145,990 205,970 230,1030 260,1045`,
  `E 205,970 260,985`,
  `E 300,930 265,985`,
  `E 0,1045 45,1090 100,1080 145,1090`,
  `E 45,1090 60,1135 130,1115 190,1100`,
  `E 460,1055 545,1040`,
  `E 615,380 620,440 605,440`,
  `E 640,1000 690,980 730,1045 755,1060`,
  `E 1000,1130 1040,1120 1085,1150 1090,1200`,
  `F 0,270 60,260 100,195 120,180`,
  `F 0,362 145,350`,
  `F 60,105 0,150`,
  `F 350,50 340,115 F 335,180`,
  `F 385,60 395,90 460,125 500,85 505,65 410,30 385,60`,
  `F 505,65 560,85`,
  `F 460,125 450,155 400,170 375,160 380,125 440,120`,
  `F 450,140 510,210 560,200`,
  `F 320,188 395,190 400,170`,
  `F 320,245 370,250 370,310`,
  `F 320,245 310,270`,
  `F 500,215 535,240`,
  `F 0,455 25,490`,
  `F 145,410 130,450 140,495`,
  `F 148,415 210,425 240,450`,
  `F 195,640 240,640 285,620`,
  `F 165,650 170,680`,
  `F 95,650 165,650 160,710 110,705 90,680 95,650`,
  `F 0,780 60,760 130,755 160,710`,
  `F 130,755 145,800`,
  `F 320,700 330,680 400,690 430,680`,
  `F 295,735 345,715 375,745 360,765 295,760`,
  `F 0,885 40,910 130,905 165,950 175,990`,
  `F 130,905 135,865 180,865 250,890 190,905 160,880`,
  `F 165,950 215,910 240,900`,
  `F 265,890 320,900 350,970`,
  `F 320,900 360,865`,
  `F 570,490 600,490 600,545 575,545`,
  `F 575,645 600,645 600,680 575,675 575,645`,
  `F 665,345 710,335 700,430 690,460`,
  `F 765,320 810,310`,
  `F 850,345 820,340 785,440`,
  `F 1100,90 1090,50 1185,40 1185,60`,
  `F 1145,145 1180,110`,
  `F 1095,250 1145,320 1130,390`,
  `F 1290,75 1320,65 1370,60 1365,105 1320,110 1290,75`,
  `F 1315,120 1355,115 1350,160 1310,150 1315,120`,
  `G 30,0 35,75 85,65`,
  `G 100,165 120,160 145,215 100,215 95,195 100,165`,
  `G 165,185 215,205 215,235 165,200 165,185`,
  `G 290,190 330,195 335,235 320,300 290,270`,
  `G 320,250 365,235 350,300 320,290`,
  `G 90,410 190,405 190,450 130,450 90,440`,
  `G 185,450 190,520 150,540 130,570 100,560 110,500 95,490 95,570`,
  `G 150,540 210,550 215,610 150,610`,
  `G 215,615 250,625 255,645 250,690`,
  `G 100,650 150,620 215,660 190,690`,
  `G 300,755 330,775 355,745 335,780 300,785`,
  `G 500,405 555,430`,
  `G 800,455 860,460 850,490`,
  `G 790,245 815,245 815,262 790,262 790,245`,
  `G 830,315 860,310 885,320 885,355 865,360 865,345`,
  `G 910,390 935,375 940,395 925,420 910,405`,
  `G 660,990 690,990 695,1030 665,1050 660,990`,
  `G 650,1050 665,1030 690,1050 680,1070`,
];

const METRO_FILLS = ["#72acbf", "#5f9fb8", "#8abbc7", "#c4e0da", "#a5cbd2", "#4a7fa3", "#72acbf"];
const COAST_FILLS = ["#8abbc7", "#9bc5ce", "#c4e0da", "#78b0c0"];

// Metropolitan suburbs: centre, spread, count, mean cell size.
const CLUSTERS: [number, number, number, number, number, number][] = [
  [1248, 1380, 12, 22, 280, 5],
  [1226, 1366, 26, 24, 210, 6.5],
  [1262, 1338, 6, 10, 30, 5],
  [1300, 1270, 7, 12, 80, 5],
  [1290, 1290, 12, 20, 44, 7],
  [1284, 1312, 6, 14, 50, 6],
  [1278, 1250, 14, 10, 24, 9],
  [1185, 1360, 16, 4, 34, 5],
  [1222, 1430, 9, 18, 34, 7],
  [1220, 1443, 4, 14, 44, 5],
  [1202, 1473, 8, 10, 18, 8],
  [1380, 1142, 8, 8, 8, 6],
  [1152, 1602, 6, 7, 10, 6],
  [1196, 1340, 18, 8, 26, 9],
  [1052, 1535, 6, 6, 10, 4],
];
const COAST_CLUSTERS: [number, number, number, number, number, number][] = [
  [1430, 893, 8, 22, 11, 9],
  [1462, 800, 5, 26, 6, 8],
  [1420, 1035, 4, 20, 4, 7],
];

function cluster([cx, cy, rx, ry, n, size]: number[], k: number, fills: string[]) {
  const cells: { d: string; fill: string }[] = [];
  for (let i = 0; i < n; i++) {
    const ang = rnd(i, k, 1) * Math.PI * 2;
    const rad = Math.sqrt(rnd(i, k, 2));
    const x = cx + Math.cos(ang) * rad * rx;
    const y = cy + Math.sin(ang) * rad * ry;
    const m = 6;
    let d = "";
    for (let j = 0; j < m; j++) {
      const r = size * (0.4 + rnd(i, j, k) * 0.8);
      const t = (j / m) * Math.PI * 2;
      d += `${j ? "L" : "M"}${(x + Math.cos(t) * r).toFixed(1)} ${(y + Math.sin(t) * r).toFixed(1)}`;
    }
    cells.push({ d: d + "Z", fill: fills[Math.floor(rnd(i, k, 5) * fills.length)] });
  }
  return cells;
}

const LAKES: string[] = [
  `A 415,55 426,55 424,86 416,75`,
  `A 485,55 564,55 564,68 545,68 535,80 520,68 495,68`,
  `A 219,226 240,236 258,240 256,252 230,242`,
  `A 76,310 82,296 95,295 105,305 105,312`,
  `A 138,376 152,368 155,350 158,376`,
  `A 138,395 158,386 177,400 176,418 167,425 173,440 165,448 152,420 140,412`,
  `A 210,445 232,446 232,460 218,460`,
  `A 264,487 275,475 290,488 300,479 325,475 355,487 395,525 390,560 400,572 388,593 365,565 338,558 325,535 292,522 275,505`,
  `A 425,630 440,618 478,620 480,640 462,650 490,680 493,700 480,712 478,740 490,772 475,780 470,792 460,790 466,768 470,750 476,730 474,700 445,692 425,668`,
  `A 452,793 440,815 440,838 434,820 425,838 428,822 438,815`,
  `A 424,845 450,885 452,915 436,960 436,1015 425,1070 408,1095 396,1100 392,1122 378,1128 373,1118 386,1112 370,1090 345,1100 325,1090 320,1068 298,1045 300,1020 325,985 328,960 350,935 388,912 400,875`,
  `A 416,1092 440,1080 446,1062 452,1075 445,1088 465,1100 474,1130 466,1130 455,1105 440,1095 428,1105`,
  `B 346,557 350,575 338,620 332,670 325,685 332,625`,
  `B 553,602 562,600 566,615 560,618`,
  `B 143,1000 160,985 195,978 212,958 240,970 262,968 250,985 260,1008 220,1015 205,1025 240,1035 250,1050 272,1050 255,1062 250,1080 232,1080 215,1065 225,1045 195,1018 175,1040 180,1050 160,1040 140,1015`,
  `B 1213,940 1228,930 1238,945 1230,958 1247,980 1235,1000 1218,995 1213,970`,
  `B 1263,940 1280,955 1280,972 1265,960`,
  `B 978,1082 988,1080 998,1100 990,1113 978,1108`,
  `B 952,1168 962,1160 968,1175 988,1200 978,1218 960,1210`,
  `B 1258,1260 1266,1248 1275,1270 1265,1282`,
  `D 250,1000 262,993 266,1010 260,1018`,
  `D 466,1215 482,1200 500,1215 482,1232`,
  `D 1022,1070 1035,1075 1045,1092 1090,1090 1088,1102 1048,1098 1042,1114 1030,1100`,
  `D 1160,1222 1180,1210 1200,1205 1208,1218 1190,1225 1200,1245 1188,1268 1180,1240 1165,1238`,
];

const QLD_LAKES = "M598 742l4 4-1 14-4-8zM590 752l6-8 2 14zM668 776l4 1-2 3z";

function buildMap() {
  anchors.length = 0;
  const outline = toPath(snap(parse(OUTLINE)), true);
  const regions = REGIONS.map(([fill, src]) => ({ fill, d: toPath(snap(parse(src)), true) }));
  const lines = LINES.map((src) => toPath(snap(parse(src)), false));
  const lakes = LAKES.map((src) => "M" + parse(src).map((p) => p.map((v) => v.toFixed(1)).join(" ")).join("L") + "Z");
  const metro = [
    ...COAST_CLUSTERS.flatMap((c, i) => cluster(c, i + 40, COAST_FILLS)),
    ...CLUSTERS.flatMap((c, i) => cluster(c, i + 1, METRO_FILLS)),
  ];
  return { outline, regions, lines, lakes, metro };
}

const MAP = buildMap();
const COAST =
  "M78 718H1459L1461 740L1468 755L1472 800L1477 822L1454 870L1446 940L1424 1000L1420 1040L1426 1060L1412 1112L1376 1190L1375 1220L1345 1245L1300 1275L1262 1350L1245 1405L1222 1440L1210 1510L1190 1535L1165 1590L1150 1660L1132 1738H192Q190 1680 173 1640Q150 1598 120 1575Q100 1563 90 1565L78 1568Z";

function StateMap() {
  return (
    <svg className="block h-full w-full overflow-visible" viewBox="78 718 1786 1020" preserveAspectRatio="none">
      <defs>
        <clipPath id="state">
          <path d={MAP.outline} />
        </clipPath>
        <linearGradient id="land" x1="0" y1="0" x2="0.15" y2="1">
          <stop offset="0" stopColor="#ededed" />
          <stop offset="0.45" stopColor="#ececec" />
          <stop offset="0.7" stopColor="#e9e9e9" />
          <stop offset="1" stopColor="#e8e8e8" />
        </linearGradient>
        <linearGradient id="ranges" x1="0" y1="0" x2="1" y2="0">
          <stop offset="0" stopColor="#e5e5e5" stopOpacity="0" />
          <stop offset="1" stopColor="#e5e5e5" stopOpacity="0.9" />
        </linearGradient>
      </defs>
      <path d={COAST} fill="url(#land)" />
      <path d="M600 718H1456L1464 752L1472 830L1300 900H600Z" fill="url(#ranges)" />
      <path d="M1449 718H1458L1463 750L1455 745L1450 735Z" fill="#dfdfdf" />
      <path d="M78 1452l8 2 3 12-6 20-5 3z" fill="#dcdcdc" />
      <path d="M78 1230l22 8 6 14 32 5-8 20 4 65-6 12 60 28 30-6 6-24 30-10 12-30 24-14 6 2v254h-40l-54 44-124-20z" fill="#e7e7e7" opacity="0.55" />
      {MAP.lakes.map((d, i) => (
        <path key={i} d={d} fill="#fff" />
      ))}
      <path d={QLD_LAKES} fill="#fff" />
      <path d="M703 1662q6-3 10 2l-2 4-8-1zM793 1660l7-1-1 4-6-1zM600 1703l8-3 3 6-7 6zM1325 760l7-4 2 4-5 5z" fill="#dcdcdc" />

      {/* interstate borders */}
      <path d="M298.4 718V845" stroke="#fff" strokeWidth="5" opacity="0.6" />
      <path d="M298.4 718V845" stroke="#7c7c7c" strokeWidth="2" />
      <path d="M295.6 1391V1738" stroke="#fff" strokeWidth="5" opacity="0.7" />
      <path d="M295.6 1391V1738M295 1391l4 6" stroke="#7c7c7c" strokeWidth="2" fill="none" />

      <path d={MAP.outline} fill="#cbe5dc" stroke="#fff" strokeWidth="5" strokeLinejoin="round" />
      <g stroke="#666" strokeWidth="2.3" strokeLinejoin="round" strokeLinecap="round">
        <g clipPath="url(#state)">
          {MAP.regions.map((r, i) => (
            <path key={i} d={r.d} fill={r.fill} />
          ))}
          <path d="M1054 1538l14-2-5 12-10 2z" fill="#ddd" stroke="none" />
          {MAP.lines.map((d, i) => (
            <path key={i} d={d} fill="none" />
          ))}
          {MAP.metro.map((c, i) => (
            <path key={i} d={c.d} fill={c.fill} strokeWidth="2" />
          ))}
        </g>
        <path d={MAP.outline} fill="none" strokeWidth="2.3" />
        <path d="M298.6 845H1039" fill="none" strokeWidth="2.4" />
        <path d="M1039 845l7-6 4-12 8-8" fill="none" stroke="#b9cfc8" />
      </g>
      <path d="M1243 1345l8-4 10 6-2 40-5 18-6 4-9-14-2-22-10-14z" fill="#666" />
      <path d="M1295 1264l12 2-8 14-8-3z" fill="#666" />
      <path d="M1233 1404l8-4 7 5-8 7-7-1z" fill="#4a7fa3" />
      <path d="M1246 1392l5-2-1 4-4 1zM1274 1318l6-5-5 10-4-1zM1324 1246l16-1-3 4h-12z" fill="#fff" />
      <circle cx="1228" cy="1382" r="6" fill="#b3cac3" />
      <path d="M1244 1375a6 6 0 0 1 12 2l-5-1z" fill="#b3cac3" />
      <circle cx="1354.500" cy="1238.500" r="1.600" fill="#666" />
      <circle cx="1159.500" cy="1650" r="1.600" fill="#666" />
      <circle cx="891" cy="1513" r="2" fill="#666" />

      <g className="font-['Noto_Sans',sans-serif]" fontSize="25">
        <g fill="#8fb0a8" opacity="0.5" textAnchor="middle">
          <text x="765" y="1267" textLength="122">New South</text>
          <text x="766" y="1297" textLength="66">Wales</text>
          <text x="1040" y="1534" textLength="110" opacity="0.45">Australian</text>
          <text x="1045" y="1564" textLength="78" opacity="0.45">Capital</text>
          <text x="1045" y="1594" textLength="100" opacity="0.45">Territory</text>
        </g>
        <text x="627" y="1736.5" textLength="89" fill="#8e8e8e" stroke="#fff" strokeWidth="3" paintOrder="stroke" strokeLinejoin="round">
          Victoria
        </text>
      </g>
    </svg>
  );
}

/* ---------- page ---------- */

const STORY = ["Starter", "Rental price", "Childcare centers", "Schools", "School quality", "Further exploration"];

const SUBURBS: string[][] = [
  ["ABBOTSFORD", "Aberdare", "Aberdeen", "ABERGLASSLYN"],
  ["ABERGLASSYN", "ABERMAIN", "ACACIA GARDENS", "ADAMSTOWN"],
  ["Adamstown Heights", "ADELONG", "AGNES BANKS", "AIRDS"],
  ["ALBION PARK", "ALBION PARK RAIL", "ALBURY", "ALEXANDRIA"],
  ["ALFORDS POINT", "ALLAMBIE HEIGHTS", "ALLAWAH", "ALSTONVILLE"],
  ["AMBARVALE", "ANNA BAY", "ANNANDALE", "ANNANGROVE", "APPIN"],
  ["ARCADIA VALE", "Ardlethan", "ARGENTON", "ARIAH PARK", "ARMIDALE"],
  ["ARNCLIFFE", "ARTARMON", "ASHBURY", "ASHCROFT", "ASHFIELD"],
  ["Ashford", "ASHMONT", "ASHTONFIELD", "ASQUITH", "AUBURN", "AUSTRAL"],
  ["AVALON", "AVOCA BEACH", "BALACLAVA (VIA MITTAGONG)"],
  ["BALGOWLAH", "BALGOWNIE", "BALLINA", "BALMAIN", "BALRANALD"],
  ["BANGALOW", "BANGOR", "BANKSIA", "BANKSTOWN", "BANORA POINT"],
  ["BARADINE", "BARDEN RIDGE", "BARDWELL PARK", "barellan"],
];

function Chevron({ dir, color }: { dir: "left" | "right"; color: string }) {
  return (
    <svg className="h-[56px] w-[32px]" viewBox="0 0 32 56" fill="none" stroke={color} strokeWidth="5" strokeLinecap="round">
      <path d={dir === "left" ? "M27 4L4 28L27 52" : "M5 4L28 28L5 52"} />
    </svg>
  );
}

function Select({ label, className, labelClass }: { label: string; className: string; labelClass: string }) {
  return (
    <div className={className}>
      <div className={`h-[55px] whitespace-nowrap text-[38px] leading-[52px] font-medium text-[#333] ${labelClass}`}>{label}</div>
      <div className="flex h-[40px] items-center justify-between border-2 border-[#aaa] bg-white pr-[11px] pl-[6px]">
        <span className="text-[24px] leading-[36px] text-[#333]">(All)</span>
        <svg className="h-[8px] w-[14px]" viewBox="0 0 14 8">
          <path d="M0 0H14L7 8Z" fill="#333" />
        </svg>
      </div>
    </div>
  );
}

export default function App() {
  return (
    <div className={`h-[1814px] w-[2766px] overflow-hidden bg-white ${FONT}`}>
      <header className="h-[134px] pt-[27px] pl-[16px]">
        <h1 className="whitespace-nowrap text-[46px] leading-[70px] font-semibold tracking-[0.35px] text-[#0d1a45]">
          New South Wales - Affordability planner
        </h1>
      </header>

      <nav className="flex h-[140px] items-center pl-[539px]">
        <Chevron dir="left" color="#dedede" />
        <div className="ml-[19px] flex h-full gap-[4px]">
          {STORY.map((s, i) => (
            <div
              key={s}
              className={`h-full w-[300px] pt-[19px] pl-[20px] text-[24px] leading-[36px] ${i === 0 ? "bg-[#dadada] tracking-[0.7px] text-black" : "bg-[#ececec] tracking-[0.15px] text-[#777]"}`}
            >
              {s}
            </div>
          ))}
        </div>
        <div className="ml-[20px] flex">
          <Chevron dir="right" color="#bfbfbf" />
        </div>
      </nav>

      <h2 className="mt-[87px] h-[123px] pl-[71px] whitespace-nowrap text-[80px] leading-[116px] font-medium tracking-[0.25px] text-[#0d1a45]">
        NSW Affordability Planner
      </h2>

      <section className="flex h-[232px] items-start">
        <div className="ml-[76px] w-[1200px] pt-[50px]">
          <div className="h-[58px] whitespace-nowrap pl-[1px] text-[38px] leading-[56px] font-medium tracking-[0.6px] text-[#333]">
            Weekly Rent To Look For ($)
          </div>
          <div className="flex h-[40px] w-[1194px] justify-between pl-[8px] text-[24px] leading-[44px] text-[#444]">
            <span>0.0</span>
            <span className="tracking-[-0.2px]">462.0</span>
          </div>
          <svg className="mt-[7px] ml-[4px] block h-[30px] w-[1180px]" viewBox="80 639 1180 30">
            <path d="M92 650h969v8H92z" fill="#666" />
            <path d="M1061 650h25v8h-25z" fill="#c6c6c6" />
            <path d="M1086 650h168v8h-168z" fill="#e4e4e4" />
            <path d="M101 641V667H96Q83 666 83 654Q83 642 96 641Z" fill="#fff" stroke="#666" strokeWidth="2" />
            <path d="M1087 641V667H1092Q1105 666 1105 654Q1105 642 1092 641Z" fill="#fff" stroke="#666" strokeWidth="2" />
          </svg>
        </div>
        <Select label="Type of dwelling" labelClass="-ml-[1px] tracking-[0.5px]" className="mt-[43px] ml-[118px] w-[492px]" />
        <Select label="Number of Bedrooms" labelClass="-ml-[2px] tracking-[0.3px]" className="mt-[41px] ml-[96px] w-[472px]" />
      </section>

      <main className="flex items-start pl-[76px]">
        <div className="relative h-[1024px] w-[1790px] border-2 border-[#e6e6e6] bg-white">
          <StateMap />
          <div className="absolute bottom-[2px] left-[2px] flex h-[28px] w-[365px] items-center gap-[11px] bg-[#fafafa]/90 pl-[5px] text-[22.5px] tracking-[-0.5px] whitespace-nowrap text-[#666]">
            <span>© 2023 Mapbox</span>
            <span>© OpenStreetMap</span>
          </div>
          <div className="absolute top-[762px] right-[22px] w-[410px] text-[#333]">
            <div className="h-[36px] whitespace-nowrap text-[23px] leading-[36px] font-semibold">Average Median Weekly Rent for N...</div>
            <div className="mt-[12px] flex h-[38px] items-center justify-end gap-[6px] text-[24px]">
              <span className="-mt-[3px] tracking-[0.3px]">0.0</span>
              <div className="h-[38px] w-[288px] border-2 border-[#aaa59b] bg-linear-to-r from-[#cfe8df] via-[#78b0c5] to-[#5c789c]" />
              <span className="-mt-[3px] w-[66px] text-right tracking-[0.7px]">451.3</span>
            </div>
          </div>
        </div>
        <aside className="ml-[12px] w-[790px] text-[#333]">
          <div className="h-[86px] pl-[8px] whitespace-nowrap text-[39px] leading-[82px] font-light tracking-[1.55px]">
            List of suburbs that satifies criteria
          </div>
          <div className="h-[488px] bg-[#d4d4d4] pt-[9px] pl-[16px]">
            {SUBURBS.map((row, i) => (
              <div key={i} className="flex h-[36px] items-center gap-[16.5px] text-[23px] leading-[36px] tracking-[0.6px] whitespace-nowrap">
                {row.map((s) => (
                  <span key={s}>{s}</span>
                ))}
                {i === SUBURBS.length - 1 && (
                  <span className="flex gap-[2px]">
                    <i className="h-[4px] w-[4px] bg-[#333]" />
                    <i className="h-[4px] w-[4px] bg-[#333]" />
                    <i className="h-[4px] w-[4px] bg-[#333]" />
                  </span>
                )}
              </div>
            ))}
          </div>
        </aside>
      </main>
    </div>
  );
}
